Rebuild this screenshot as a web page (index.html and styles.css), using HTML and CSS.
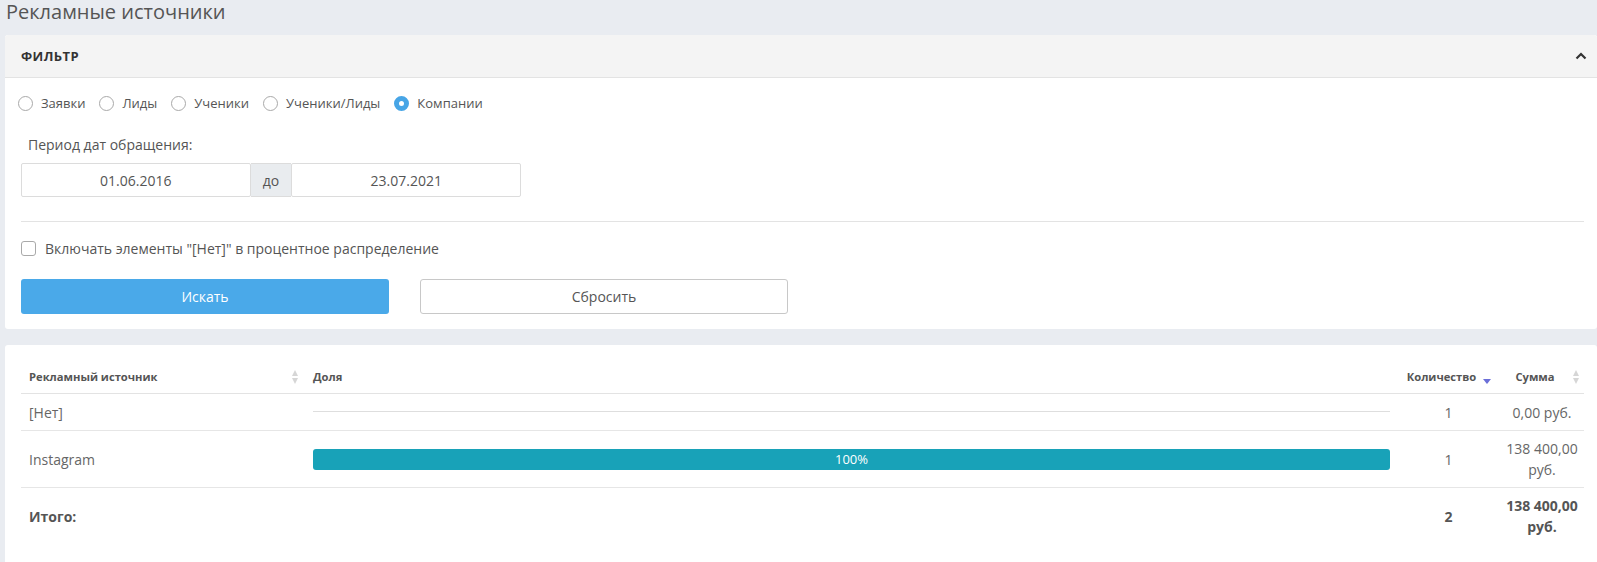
FILE: index.html
```html
<!DOCTYPE html>
<html lang="ru">
<head>
    <meta charset="UTF-8">
    <meta name="viewport" content="width=device-width, initial-scale=1.0">
    <title>Рекламные источники</title>
    <link rel="stylesheet" href="styles.css">
</head>
<body>
    <h1 class="page-title">Рекламные источники</h1>

    <div class="panel">
        <div class="panel-heading">
            <span class="panel-title">Фильтр</span>
            <svg class="collapse-icon" width="12" height="8" viewBox="0 0 12 8">
                <path d="M1.5 6.5 L6 2 L10.5 6.5" fill="none" stroke="#333" stroke-width="2.2"/>
            </svg>
        </div>
        <form class="panel-body filter-form">
            <div class="radio-row">
                <label class="radio"><span class="radio-mark"></span>Заявки</label>
                <label class="radio"><span class="radio-mark"></span>Лиды</label>
                <label class="radio"><span class="radio-mark"></span>Ученики</label>
                <label class="radio"><span class="radio-mark"></span>Ученики/Лиды</label>
                <label class="radio"><span class="radio-mark checked"></span>Компании</label>
            </div>

            <label class="field-label">Период дат обращения:</label>
            <div class="date-range">
                <input class="date-input" type="text" value="01.06.2016">
                <span class="date-addon">до</span>
                <input class="date-input" type="text" value="23.07.2021">
            </div>

            <hr class="divider">

            <label class="checkbox"><span class="checkbox-mark"></span>Включать элементы "[Нет]" в процентное распределение</label>

            <div class="buttons">
                <button type="submit" class="btn btn-primary">Искать</button>
                <button type="reset" class="btn btn-default">Сбросить</button>
            </div>
        </form>
    </div>

    <div class="panel results">
        <table class="report-table">
            <colgroup>
                <col class="col-source">
                <col>
                <col class="col-count">
                <col class="col-sum">
            </colgroup>
            <thead>
                <tr>
                    <th class="sorting">Рекламный источник</th>
                    <th>Доля</th>
                    <th class="center sorting-desc">Количество</th>
                    <th class="center sorting sorting-last">Сумма</th>
                </tr>
            </thead>
            <tbody>
                <tr>
                    <td>[Нет]</td>
                    <td class="share"><div class="bar-empty"></div></td>
                    <td class="num">1</td>
                    <td class="sum">0,00 руб.</td>
                </tr>
                <tr>
                    <td>Instagram</td>
                    <td class="share"><div class="bar" style="width: 100%">100%</div></td>
                    <td class="num">1</td>
                    <td class="sum">138 400,00 руб.</td>
                </tr>
                <tr class="total">
                    <td>Итого:</td>
                    <td></td>
                    <td class="num">2</td>
                    <td class="sum">138 400,00 руб.</td>
                </tr>
            </tbody>
        </table>
    </div>
</body>
</html>
```

FILE: styles.css
```css
body {
    margin: 0;
    padding: 0 0 0 5px;
    background-color: #e9ecf1;
    font-family: "Open Sans", Arial, sans-serif;
    font-size: 13px;
    color: #555;
}

.page-title {
    margin: 0;
    height: 35px;
    padding-left: 1px;
    font-size: 20px;
    font-weight: normal;
    line-height: 24px;
    color: #555;
}

.panel {
    background-color: #fff;
    border-radius: 3px;
    margin-bottom: 16px;
}

.panel-heading {
    display: flex;
    justify-content: space-between;
    align-items: center;
    height: 42px;
    padding: 0 10px 0 16px;
    background-color: #f4f4f4;
    border-bottom: 1px solid #e3e3e3;
    border-radius: 3px 3px 0 0;
}

.panel-title {
    font-size: 13px;
    font-weight: bold;
    letter-spacing: 0.4px;
    text-transform: uppercase;
    color: #333;
}

.filter-form {
    padding: 14px 13px 15px 16px;
}

.radio-row {
    display: flex;
    align-items: center;
    gap: 14px;
    height: 22px;
    margin-left: -3px;
}

.radio, .checkbox {
    display: flex;
    align-items: center;
    gap: 8px;
    cursor: pointer;
}

.radio-mark {
    box-sizing: border-box;
    width: 15px;
    height: 15px;
    border: 1px solid #a9a9a9;
    border-radius: 50%;
    background-color: #fff;
}

.radio-mark.checked {
    border: 5px solid #47a5e6;
    background-color: #fff;
}

.field-label {
    display: block;
    margin-top: 22px;
    padding-left: 7px;
    font-size: 14px;
    line-height: 18px;
}

.date-range {
    display: flex;
    width: 500px;
    height: 34px;
    margin-top: 9px;
}

.date-input {
    box-sizing: border-box;
    width: 230px;
    height: 34px;
    padding: 0;
    border: 1px solid #dcdcdc;
    border-radius: 2px;
    font-family: inherit;
    font-size: 14px;
    color: #555;
    text-align: center;
}

.date-addon {
    box-sizing: border-box;
    width: 41px;
    display: flex;
    align-items: center;
    justify-content: center;
    font-size: 14px;
    background-color: #e9ecef;
    border-top: 1px solid #dcdcdc;
    border-bottom: 1px solid #dcdcdc;
}

.divider {
    margin: 24px 0 0 0;
    border: none;
    border-top: 1px solid #e3e3e3;
}

.checkbox {
    height: 16px;
    margin-top: 18px;
    gap: 9px;
    font-size: 14px;
}

.checkbox-mark {
    box-sizing: border-box;
    width: 15px;
    height: 15px;
    border: 1px solid #a9a9a9;
    border-radius: 3px;
    background-color: #fff;
}

.buttons {
    display: flex;
    gap: 31px;
    margin-top: 23px;
}

.btn {
    width: 368px;
    height: 35px;
    border-radius: 3px;
    font-family: inherit;
    font-size: 14px;
    cursor: pointer;
}

.btn-primary {
    background-color: #4aa9e9;
    color: #fff;
    border: none;
}

.btn-default {
    background-color: #fff;
    color: #555;
    border: 1px solid #c8c8c8;
}

.results {
    padding: 16px 13px 40px 16px;
    margin-bottom: 0;
}

.report-table {
    width: 100%;
    border-collapse: collapse;
    table-layout: fixed;
}

.col-source {
    width: 284px;
}

.col-count {
    width: 103px;
}

.col-sum {
    width: 84px;
}

.report-table th {
    position: relative;
    padding: 8px 8px 9px 8px;
    font-size: 11.2px;
    font-weight: bold;
    line-height: 15px;
    text-align: left;
    color: #555;
    border-bottom: 1px solid #e3e3e3;
}

.report-table th.center {
    text-align: center;
    padding-right: 22px;
}

.sorting::before, .sorting::after {
    content: "";
    position: absolute;
    right: 7px;
    border-left: 3.5px solid transparent;
    border-right: 3.5px solid transparent;
}

.sorting::before {
    top: 9px;
    border-bottom: 6px solid #d6d6d6;
}

.sorting::after {
    top: 17px;
    border-top: 6px solid #d6d6d6;
}

.sorting-last::before, .sorting-last::after {
    right: 5px;
}

.sorting-desc::after {
    content: "";
    position: absolute;
    right: 9px;
    top: 18px;
    border-left: 4px solid transparent;
    border-right: 4px solid transparent;
    border-top: 5px solid #6b6fd8;
}

.report-table td {
    padding: 7px 8px;
    font-size: 14px;
    line-height: 21px;
    color: #666;
    border-bottom: 1px solid #e6e6e6;
    vertical-align: middle;
}

.report-table td.share {
    padding: 7px 7px 7px 8px;
}

.report-table td.num {
    text-align: center;
}

.report-table td.sum {
    padding: 7px 4px;
    text-align: center;
}

.bar-empty {
    height: 1px;
    margin: 10px 0 11px 0;
    background-color: #dedede;
}

.bar {
    height: 21px;
    line-height: 21px;
    border-radius: 3px;
    background-color: #18a2b8;
    color: #fff;
    font-size: 13px;
    text-align: center;
}

.total td {
    font-weight: bold;
    color: #555;
    border-bottom: none;
}
```
